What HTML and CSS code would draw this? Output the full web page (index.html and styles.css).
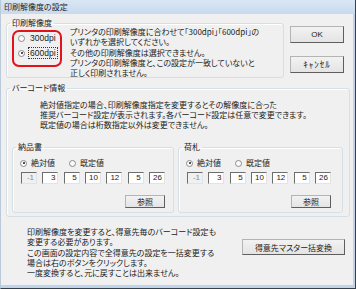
FILE: index.html
```html
<!DOCTYPE html>
<html lang="ja">
<head>
    <meta charset="UTF-8">
    <title>印刷解像度の設定</title>
    <link rel="stylesheet" href="styles.css">
</head>
<body>
    <div class="window">
        <div class="titlebar">印刷解像度の設定</div>
        <div class="client">
            <div class="top-row">
                <fieldset class="group res-group">
                    <legend>印刷解像度</legend>
                    <div class="res-choices">
                        <div class="option"><span class="radio"></span><span class="dpi">300dpi</span></div>
                        <div class="option"><span class="radio checked"></span><span class="dpi focus">600dpi</span></div>
                    </div>
                    <p class="note res-note">プリンタの印刷解像度に合わせて｢300dpi｣｢600dpi｣の<br>いずれかを選択してください。<br>その他の印刷解像度は選択できません。<br>プリンタの印刷解像度と、この設定が一致していないと<br>正しく印刷されません。</p>
                </fieldset>
                <div class="dialog-buttons">
                    <button class="button ok">OK</button>
                    <button class="button cancel">ｷｬﾝｾﾙ</button>
                </div>
            </div>

            <fieldset class="group barcode-group">
                <legend>バーコード情報</legend>
                <p class="note barcode-note">絶対値指定の場合、印刷解像度指定を変更するとその解像度に合った<br>推奨バーコード設定が表示されます。各バーコード設定は任意で変更できます。<br>既定値の場合は桁数指定以外は変更できません。</p>
                <div class="doc-groups">
                    <fieldset class="group doc delivery">
                        <legend>納品書</legend>
                        <div class="mode-row">
                            <div class="option mode"><span class="radio checked"></span>絶対値</div>
                            <div class="option mode"><span class="radio"></span>既定値</div>
                        </div>
                        <div class="fields">
                            <div class="boxes">
                                <span class="box disabled">-1</span>
                                <span class="box">3</span>
                                <span class="box">5</span>
                                <span class="box">10</span>
                                <span class="box">12</span>
                                <span class="box">5</span>
                                <span class="box">26</span>
                            </div>
                            <button class="button browse">参照</button>
                        </div>
                    </fieldset>
                    <fieldset class="group doc tag">
                        <legend>荷札</legend>
                        <div class="mode-row">
                            <div class="option mode"><span class="radio checked"></span>絶対値</div>
                            <div class="option mode"><span class="radio"></span>既定値</div>
                        </div>
                        <div class="fields">
                            <div class="boxes">
                                <span class="box disabled">-1</span>
                                <span class="box">3</span>
                                <span class="box">5</span>
                                <span class="box">10</span>
                                <span class="box">12</span>
                                <span class="box">5</span>
                                <span class="box">26</span>
                            </div>
                            <button class="button browse">参照</button>
                        </div>
                    </fieldset>
                </div>
            </fieldset>

            <div class="bottom-row">
                <p class="note bottom-note">印刷解像度を変更すると、得意先毎のバーコード設定も<br>変更する必要があります。<br>この画面の設定内容で全得意先の設定を一括変更する<br>場合は右のボタンをクリックします。<br>一度変換すると、元に戻すことは出来ません。</p>
                <button class="button convert">得意先マスター括変換</button>
            </div>
        </div>
    </div>
</body>
</html>
```

FILE: styles.css
```css
body {
    margin: 0;
    background: #ffffff;
    font-family: "Noto Sans CJK JP", sans-serif;
    font-size: 8px;
    color: #1b1b1b;
}

.window {
    width: 356px;
    height: 289px;
    box-sizing: border-box;
    display: flex;
    flex-direction: column;
    background: #f0f0f0;
    border-left: 1px solid #b9c9da;
    border-right: 1px solid #34404c;
    border-bottom: 1px solid #34404c;
}

.titlebar {
    height: 14px;
    line-height: 14px;
    padding-left: 3px;
    background: linear-gradient(to bottom, #d9e6f4, #c8daee);
    color: #1e1e1e;
    font-feature-settings: "palt";
}

.client {
    flex: 1;
    padding: 5px 0 0 5px;
    border-right: 2px solid #bfd4ea;
    border-bottom: 3px solid #bfd4ea;
}

.note {
    margin: 0;
    white-space: nowrap;
    font-feature-settings: "palt";
}

/* group boxes */
.group {
    margin: 0;
    padding: 0;
    box-sizing: border-box;
    border: 1px solid #d5dfe5;
    border-radius: 3px;
    box-shadow: inset 1px 1px 0 #ffffff;
}

.group legend {
    margin-left: 3px;
    padding: 0 2px;
    line-height: 8px;
    font-feature-settings: "palt";
}

.top-row {
    display: flex;
    align-items: flex-start;
}

.res-group {
    width: 278px;
    height: 59px;
    display: flex;
    align-items: flex-start;
}

.res-choices {
    width: 50px;
    height: 37px;
    box-sizing: border-box;
    margin: 3px 0 0 5px;
    padding-top: 1px;
    border: 2px solid #e4131b;
    border-radius: 7px;
}

.option {
    display: flex;
    align-items: center;
    height: 10px;
    line-height: 10px;
}

.res-choices .option + .option {
    margin-top: 5px;
}

.radio {
    width: 7px;
    height: 7px;
    box-sizing: border-box;
    border: 1px solid #8b8b8b;
    border-radius: 50%;
    background: #fbfbfb;
    position: relative;
    flex: none;
}

.radio.checked::after {
    content: "";
    position: absolute;
    left: 1.5px;
    top: 1.5px;
    width: 2px;
    height: 2px;
    border-radius: 50%;
    background: #1a1a1a;
}

.res-choices .radio {
    margin-left: 4px;
    margin-right: 3px;
}

.dpi {
    font-family: "Liberation Sans", sans-serif;
    font-size: 8.5px;
    padding: 0 1px;
    border: 1px solid transparent;
}

.dpi.focus {
    border: 1px dotted #333333;
}

.res-note {
    margin-left: 8px;
    line-height: 10.25px;
}

.dialog-buttons {
    display: flex;
    flex-direction: column;
    margin-left: 6px;
}

.button {
    font-family: "Noto Sans CJK JP", sans-serif;
    font-size: 8px;
    color: #1b1b1b;
    padding: 0;
    background: linear-gradient(to bottom, #f2f2f2, #e4e4e4);
    border: 1px solid #b4b4b4;
    border-right-color: #5e5e5e;
    border-bottom-color: #5e5e5e;
    font-feature-settings: "palt";
}

.ok,
.cancel {
    width: 54px;
    height: 17px;
}

.ok {
    margin-top: 7px;
    font-family: "Liberation Sans", sans-serif;
}

.cancel {
    margin-top: 13px;
    font-size: 9px;
    letter-spacing: 1px;
    font-feature-settings: normal;
}

/* barcode section */
.barcode-group {
    width: 344px;
    margin-top: 6px;
    padding-bottom: 3px;
}

.barcode-note {
    margin: 8px 0 0 33px;
    line-height: 10px;
}

.doc-groups {
    display: flex;
    gap: 4px;
    margin: 13px 0 0 5px;
}

.doc {
    padding: 0 0 4px 0;
}

.delivery {
    width: 162px;
}

.tag {
    width: 165px;
}

.mode-row {
    display: flex;
    margin: 7px 0 0 7px;
}

.mode {
    width: 49px;
}

.mode .radio {
    margin-right: 4px;
}

.fields {
    width: 144px;
    margin: 4px 0 0 8px;
    display: flex;
    flex-direction: column;
}

.boxes {
    display: flex;
    justify-content: space-between;
}

.box {
    width: 16px;
    height: 12px;
    box-sizing: border-box;
    padding-right: 2px;
    text-align: right;
    line-height: 10px;
    font-family: "Liberation Sans", sans-serif;
    font-size: 8px;
    background: #ffffff;
    border: 1px solid #e3e3e3;
    border-top-color: #6d6d6d;
    border-left-color: #6d6d6d;
}

.box.disabled {
    background: #f0f0f0;
    color: #8a8a8a;
}

.browse {
    align-self: flex-end;
    width: 40px;
    height: 13px;
    margin-top: 11px;
    line-height: 10px;
}

/* bottom */
.bottom-row {
    display: flex;
    align-items: flex-start;
    margin-top: 10px;
}

.bottom-note {
    margin-left: 21px;
    line-height: 10.25px;
}

.convert {
    width: 103px;
    height: 16px;
    margin: 12px 8px 0 auto;
}
```
